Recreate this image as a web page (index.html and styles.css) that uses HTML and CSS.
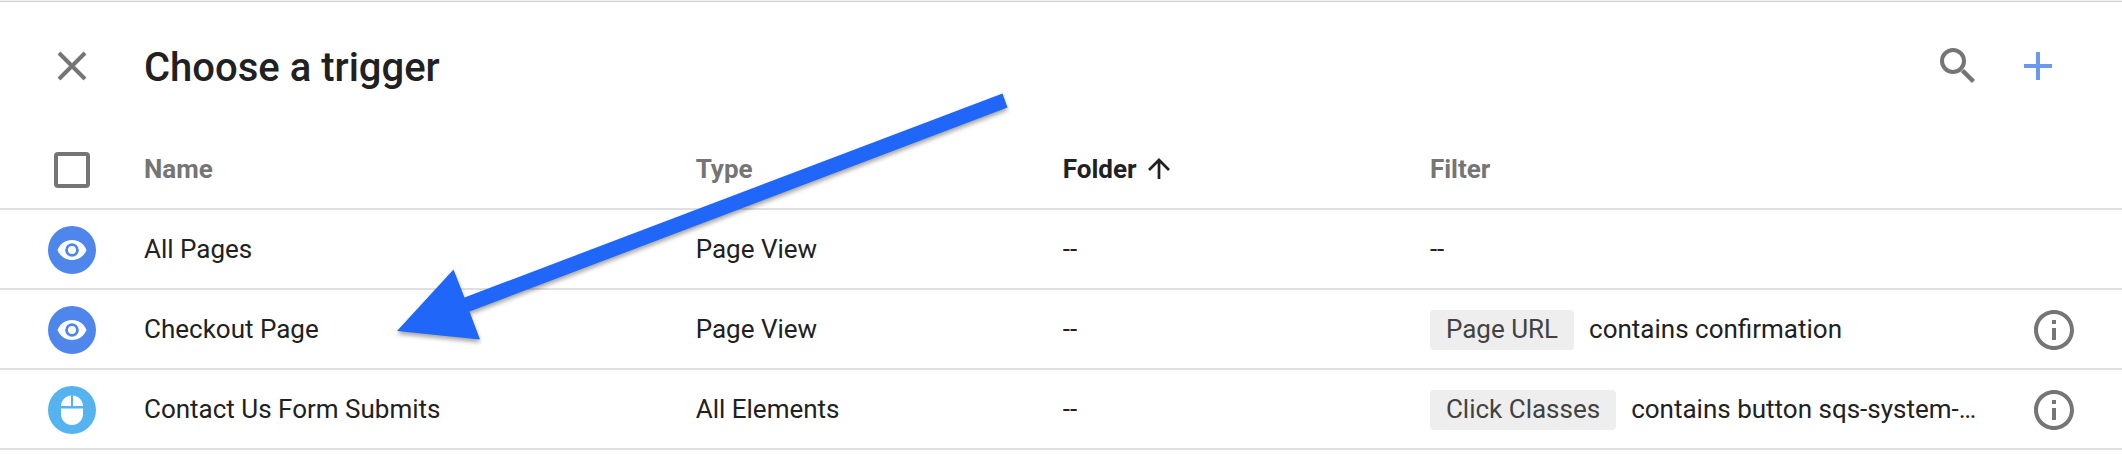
FILE: index.html
```html
<!DOCTYPE html>
<html lang="en">
<head>
<meta charset="utf-8">
<title>Choose a trigger</title>
<link rel="stylesheet" href="styles.css">
</head>
<body>
<svg class="symbols" aria-hidden="true">
  <symbol id="eye" viewBox="0 0 48 48">
    <path fill="#fff" d="M24 14C17.300 14 11.700 18.100 9.500 24 11.700 29.900 17.300 34 24 34s12.300-4.100 14.500-10C36.300 18.100 30.700 14 24 14z"/>
    <circle cx="24" cy="24" r="5.400" fill="#fff" stroke="#4f86ec" stroke-width="2.800"/>
  </symbol>
  <symbol id="mouse" viewBox="0 0 48 48">
    <path fill="#fff" d="M25 9.500V20h10C35 14.600 30.700 10 25 9.500zM13 28c0 6.100 4.900 11 11 11s11-4.900 11-11v-5.500H13zM23 9.500C17.300 10 13 14.600 13 20h10z"/>
  </symbol>
  <symbol id="info" viewBox="0 0 24 24">
    <path d="M11 17h2v-6h-2v6zm1-15C6.480 2 2 6.480 2 12s4.480 10 10 10 10-4.480 10-10S17.520 2 12 2zm0 18c-4.410 0-8-3.590-8-8s3.590-8 8-8 8 3.590 8 8-3.590 8-8 8zM11 9h2V7h-2v2z"/>
  </symbol>
</svg>
<main class="sheet">
  <header class="bar">
    <button class="icon-button" type="button" aria-label="Close">
      <svg viewBox="0 0 36 36"><path d="M5 5L31 31M31 5L5 31" fill="none" stroke="#757575" stroke-width="4"/></svg>
    </button>
    <h1 class="title">Choose a trigger</h1>
    <div class="actions">
      <button class="icon-button" type="button" aria-label="Search">
        <svg viewBox="0 0 36 36"><circle cx="13" cy="13" r="11" fill="none" stroke="#757575" stroke-width="4"/><path d="M22.500 22.500L33.500 33.500" stroke="#757575" stroke-width="4.500"/></svg>
      </button>
      <button class="icon-button" type="button" aria-label="New trigger">
        <svg viewBox="0 0 36 36"><path d="M18 4V32M4 18H32" fill="none" stroke="#6a9af0" stroke-width="4"/></svg>
      </button>
    </div>
  </header>
  <table class="triggers">
    <colgroup>
      <col class="col-icon"><col class="col-wide"><col class="col-narrow"><col class="col-narrow"><col class="col-wide"><col>
    </colgroup>
    <thead>
      <tr>
        <th class="lead"><input class="check" type="checkbox" aria-label="Select all triggers"></th>
        <th>Name</th>
        <th>Type</th>
        <th class="sorted" aria-sort="ascending"><span class="sort">Folder<svg class="sort-arrow" viewBox="0 0 24 24" aria-hidden="true"><path d="M12 22V3M2 13L12 3L22 13" fill="none" stroke="currentColor" stroke-width="2.700"/></svg></span></th>
        <th>Filter</th>
        <td></td>
      </tr>
    </thead>
    <tbody>
      <tr>
        <td class="lead"><svg class="badge view"><use href="#eye"/></svg></td>
        <td>All Pages</td><td>Page View</td><td>--</td><td>--</td><td></td>
      </tr>
      <tr>
        <td class="lead"><svg class="badge view"><use href="#eye"/></svg></td>
        <td>Checkout Page</td><td>Page View</td><td>--</td>
        <td><div class="filter"><span class="chip">Page URL</span><span class="condition">contains confirmation</span></div></td>
        <td class="tail"><button class="info-button" type="button" aria-label="About Checkout Page"><svg><use href="#info"/></svg></button></td>
      </tr>
      <tr>
        <td class="lead"><svg class="badge click"><use href="#mouse"/></svg></td>
        <td>Contact Us Form Submits</td><td>All Elements</td><td>--</td>
        <td><div class="filter"><span class="chip">Click Classes</span><span class="condition">contains button sqs-system-button</span></div></td>
        <td class="tail"><button class="info-button" type="button" aria-label="About Contact Us Form Submits"><svg><use href="#info"/></svg></button></td>
      </tr>
    </tbody>
  </table>
  <svg class="pointer" viewBox="0 0 612 248" aria-hidden="true"><path fill="#1f66f9" d="M0 238L56.500 176.500L67.500 204.500L605.500 0.500L610.500 14.500L72.500 218.500L83 246.500z"/></svg>
</main>
</body>
</html>
```
FILE: styles.css
```css
* {
  box-sizing: border-box;
}

body {
  margin: 0;
  background: #fff;
  color: #212121;
  font-family: Roboto, "Liberation Sans", sans-serif;
  font-size: 26px;
  line-height: 36px;
}

.symbols {
  position: absolute;
  width: 0;
  height: 0;
}

.sheet {
  position: relative;
  border-top: 1px solid #f0f0f0;
}

.bar {
  display: flex;
  align-items: center;
  height: 129px;
  padding: 0 66px 0 54px;
  border-top: 1px solid #d0d0d0;
}

.icon-button,
.info-button {
  display: block;
  flex: none;
  padding: 0;
  border: 0;
  background: none;
}

.icon-button {
  width: 36px;
  height: 36px;
}

.icon-button svg,
.info-button svg {
  display: block;
  width: 100%;
  height: 100%;
}

.title {
  margin: 0 0 0 54px;
  padding-top: 4px;
  font-size: 40px;
  font-weight: 500;
  line-height: 48px;
}

.actions {
  display: flex;
  gap: 44px;
  margin-left: auto;
}

.triggers {
  width: 100%;
  border-spacing: 0;
  table-layout: fixed;
}

.col-icon {
  width: 144px;
}

.col-wide {
  width: 26%;
}

.col-narrow {
  width: 17.3%;
}

.triggers th,
.triggers td {
  height: 80px;
  padding: 0;
  border-bottom: 2px solid #e0e0e0;
  text-align: left;
  vertical-align: middle;
  white-space: nowrap;
}

.triggers th {
  color: #757575;
  font-weight: 700;
}

.triggers .sorted {
  color: #212121;
}

.triggers .lead {
  padding: 2px 0 0 48px;
}

.sort {
  display: flex;
  align-items: center;
  gap: 10px;
}

.sort-arrow {
  width: 24px;
  height: 24px;
}

.check {
  display: block;
  width: 36px;
  height: 36px;
  margin: 0 0 0 6px;
  border: 4px solid #757575;
  border-radius: 4px;
  appearance: none;
}

.badge {
  display: block;
  width: 48px;
  height: 48px;
  border-radius: 50%;
}

.view {
  background: #4f86ec;
}

.click {
  background: #55b3f0;
}

.filter {
  display: flex;
  align-items: baseline;
  gap: 15px;
  padding: 2px 4px 0 0;
}

.chip {
  flex: none;
  padding: 0 16px 2px;
  border-radius: 4px;
  background: #eee;
  color: #424242;
  line-height: 38px;
}

.condition {
  overflow: hidden;
  text-overflow: ellipsis;
}

.info-button {
  width: 48px;
  height: 48px;
  margin-left: auto;
  fill: #757575;
}

.triggers .tail {
  padding: 2px 44px 0 0;
}

.pointer {
  position: absolute;
  top: 92px;
  left: 397px;
  width: 612px;
  height: 248px;
  overflow: visible;
  filter: drop-shadow(0 3px 2px rgba(0, 0, 0, 0.35));
  pointer-events: none;
}
```
